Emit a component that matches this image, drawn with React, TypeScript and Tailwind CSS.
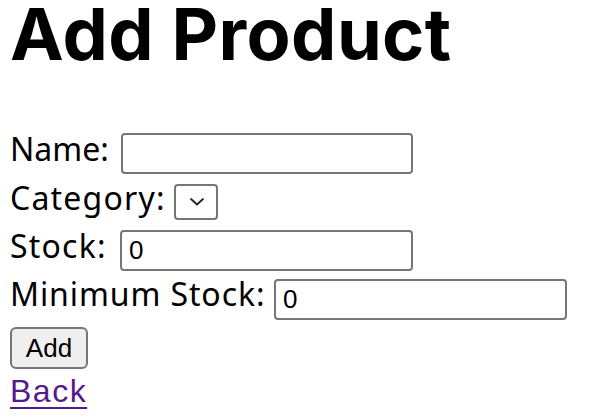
import React from "react";

export default function App() {
  return (
    <div className="w-[608px] h-[420px] overflow-hidden bg-white pl-[10px] text-black font-['Noto_Sans',sans-serif]">
      <h1 className="h-[68px] text-[72px] leading-[68px] font-bold tracking-[0.4px] font-['Inter',sans-serif] whitespace-nowrap">
        Add Product
      </h1>
      <form className="mt-[57px] flex flex-col" onSubmit={(e) => e.preventDefault()}>
        <div className="flex h-[49px] items-start">
          <span className="w-[111px] text-[32px] leading-[48px] whitespace-nowrap">Name:</span>
          <input
            type="text"
            className="mt-[8px] h-[41px] w-[292px] rounded-[4px] border-2 border-[#767676] bg-white px-[4px] text-[26px] font-['Liberation_Sans',sans-serif] outline-none"
          />
        </div>
        <div className="flex h-[48px] items-start">
          <span className="w-[164px] text-[32px] leading-[48px] tracking-[1.2px] whitespace-nowrap">Category:</span>
          <div className="mt-[10px] flex h-[36px] w-[44px] items-center justify-center rounded-[4px] border-2 border-[#767676] bg-white">
            <svg width="16" height="10" viewBox="0 0 16 10" className="ml-[2px]">
              <polyline points="2,2 8,7.5 14,2" fill="none" stroke="#222" strokeWidth="1.8" strokeLinecap="round" strokeLinejoin="round" />
            </svg>
          </div>
        </div>
        <div className="flex h-[48px] items-start">
          <span className="w-[110px] text-[32px] leading-[48px] tracking-[1.2px] whitespace-nowrap">Stock:</span>
          <input
            type="text"
            defaultValue="0"
            className="mt-[8px] h-[41px] w-[293px] rounded-[4px] border-2 border-[#767676] bg-white px-[4px] pl-[7px] text-[26px] font-['Liberation_Sans',sans-serif] outline-none"
          />
        </div>
        <div className="flex h-[48px] items-start">
          <span className="w-[264px] text-[32px] leading-[48px] tracking-[0.9px] whitespace-nowrap">Minimum Stock:</span>
          <input
            type="text"
            defaultValue="0"
            className="mt-[9px] h-[41px] w-[293px] rounded-[4px] border-2 border-[#767676] bg-white px-[4px] pl-[7px] text-[26px] font-['Liberation_Sans',sans-serif] outline-none"
          />
        </div>
        <div className="flex h-[49px] items-start">
          <button
            type="submit"
            className="mt-[9px] flex h-[42px] w-[78px] items-center justify-center rounded-[6px] border-2 border-[#767676] bg-[#efefef] text-[26px] font-['Liberation_Sans',sans-serif] leading-none"
          >
            Add
          </button>
        </div>
        <div className="flex h-[48px] items-start">
          <a href="#" className="text-[32px] leading-[48px] text-[#551a8b] underline decoration-[2px] underline-offset-[5px] font-['Liberation_Sans',sans-serif] tracking-[1.5px]">
            Back
          </a>
        </div>
      </form>
    </div>
  );
}
